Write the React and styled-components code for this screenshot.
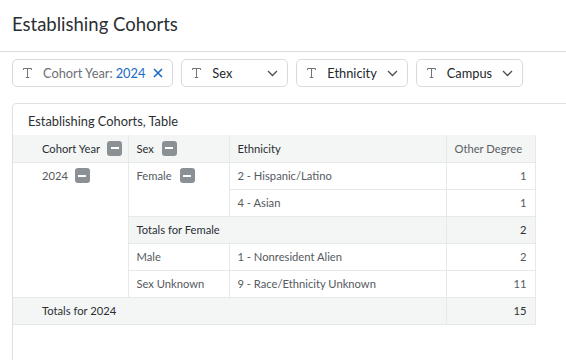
import React from 'react';
import styled, { createGlobalStyle } from 'styled-components';

const GlobalStyle = createGlobalStyle`
  body {
    margin: 0;
    font-family: Lato, "Noto Sans", sans-serif;
    background: #ffffff;
    overflow: hidden;
  }
`;

const Page = styled.div`
  width: 566px;
  height: 360px;
  overflow: hidden;
`;

const TitleBar = styled.header`
  height: 52px;
  box-sizing: border-box;
  padding: 11px 12px 0;
  border-bottom: 1px solid #dcdcdc;
  font-size: 18.5px;
  line-height: 26px;
  color: #2b2f33;
`;

const FilterBar = styled.div`
  display: flex;
  gap: 8px;
  padding: 7px 12px 0;
`;

const Pill = styled.div`
  display: flex;
  align-items: center;
  height: 28px;
  box-sizing: border-box;
  min-width: ${p => p.minWidth || 0}px;
  padding: 0 9px 0 10px;
  border: 1px solid #dadada;
  border-radius: 5px;
  font-size: 12.8px;
  color: #222;
`;

const Label = styled.span`
  margin-left: 11px;
  color: ${p => p.muted ? '#6b7075' : '#23272b'};
`;

const Value = styled.span`
  margin-left: 3px;
  color: #1a6bc4;
`;

const Trail = styled.span`
  display: flex;
  margin-left: auto;
  padding-left: ${p => p.space || 10}px;
`;

const Card = styled.section`
  margin: 16px 0 0 12px;
  width: 620px;
  height: 300px;
  border: 1px solid #e0e0e0;
  border-radius: 4px;
`;

const CardTitle = styled.div`
  height: 31px;
  box-sizing: border-box;
  padding: 3px 0 0 15px;
  display: flex;
  align-items: center;
  font-size: 12.8px;
  color: #2b2f33;
`;

const Table = styled.table`
  border-collapse: collapse;
  table-layout: fixed;
  width: 522px;
  font-size: 11.2px;
`;

const Row = styled.tr`
  height: 27px;
`;

const Cell = styled.td`
  box-sizing: border-box;
  padding: 0 8px 0 ${p => p.indent ? 29 : 8}px;
  border: 1px solid #e6e9e9;
  border-top: none;
  background: ${p => p.shade ? '#f4f6f6' : '#ffffff'};
  color: ${p => p.strong ? '#2b2f33' : '#555a5e'};
  text-align: ${p => p.num ? 'right' : 'left'};
  vertical-align: ${p => p.top ? 'top' : 'middle'};
  white-space: nowrap;
  &:first-child { border-left: none; }
`;

const Head = styled.th`
  box-sizing: border-box;
  padding: 0 8px 0 ${p => p.indent ? 29 : 8}px;
  border: 1px solid #e6e9e9;
  border-top: none;
  background: #f4f6f6;
  font-weight: normal;
  text-align: left;
  color: ${p => p.light ? '#5b6064' : '#2b2f33'};
  white-space: nowrap;
  &:first-child { border-left: none; }
`;

const Inline = styled.div`
  display: flex;
  align-items: center;
  gap: ${p => p.gap || 7}px;
  height: ${p => p.h || 'auto'};
`;

const Collapse = styled.span`
  display: inline-flex;
  flex: none;
  align-items: center;
  justify-content: center;
  width: 15px;
  height: 15px;
  border-radius: 3px;
  background: #8b9095;
  &::after {
    content: '';
    width: 8px;
    height: 2px;
    background: #ffffff;
  }
`;

const TypeIcon = () => (
  <svg width="9" height="10" viewBox="0 0 9 10" fill="none" stroke="#6f7479" strokeWidth="1">
    <path d="M0.5 2 V0.5 H8.5 V2" />
    <path d="M4.5 0.5 V9.5" />
    <path d="M2.8 9.5 H6.2" />
  </svg>
);

const Chevron = () => (
  <svg width="11" height="7" viewBox="0 0 11 7" fill="none" stroke="#4a4f54" strokeWidth="1.3">
    <path d="M1 1 L5.5 5.5 L10 1" />
  </svg>
);

const Close = () => (
  <svg width="10" height="10" viewBox="0 0 10 10" fill="none" stroke="#1a6bc4" strokeWidth="1.6">
    <path d="M1 1 L9 9 M9 1 L1 9" />
  </svg>
);

const filters = [
  { label: 'Sex', minWidth: 107 },
  { label: 'Ethnicity', minWidth: 107 },
  { label: 'Campus', minWidth: 107 },
];

export default function App() {
  return (
    <Page>
      <GlobalStyle />
      <TitleBar>Establishing Cohorts</TitleBar>
      <FilterBar>
        <Pill>
          <TypeIcon />
          <Label muted>Cohort Year:</Label>
          <Value>2024</Value>
          <Trail space={8}><Close /></Trail>
        </Pill>
        {filters.map(f => (
          <Pill key={f.label} minWidth={f.minWidth}>
            <TypeIcon />
            <Label>{f.label}</Label>
            <Trail><Chevron /></Trail>
          </Pill>
        ))}
      </FilterBar>
      <Card>
        <CardTitle>Establishing Cohorts, Table</CardTitle>
        <Table>
          <colgroup>
            <col style={{ width: 115 }} />
            <col style={{ width: 101 }} />
            <col style={{ width: 217 }} />
            <col style={{ width: 89 }} />
          </colgroup>
          <thead>
            <Row>
              <Head indent><Inline>Cohort Year <Collapse /></Inline></Head>
              <Head><Inline gap={8}>Sex <Collapse /></Inline></Head>
              <Head>Ethnicity</Head>
              <Head light>Other Degree</Head>
            </Row>
          </thead>
          <tbody>
            <Row>
              <Cell indent top rowSpan={5}><Inline h="26px">2024 <Collapse /></Inline></Cell>
              <Cell top rowSpan={2}><Inline gap={8} h="26px">Female <Collapse /></Inline></Cell>
              <Cell>2 - Hispanic/Latino</Cell>
              <Cell num>1</Cell>
            </Row>
            <Row>
              <Cell>4 - Asian</Cell>
              <Cell num>1</Cell>
            </Row>
            <Row>
              <Cell shade strong colSpan={2}>Totals for Female</Cell>
              <Cell shade strong num>2</Cell>
            </Row>
            <Row>
              <Cell>Male</Cell>
              <Cell>1 - Nonresident Alien</Cell>
              <Cell num>2</Cell>
            </Row>
            <Row>
              <Cell>Sex Unknown</Cell>
              <Cell>9 - Race/Ethnicity Unknown</Cell>
              <Cell num>11</Cell>
            </Row>
            <Row>
              <Cell shade strong indent colSpan={3}>Totals for 2024</Cell>
              <Cell shade strong num>15</Cell>
            </Row>
          </tbody>
        </Table>
      </Card>
    </Page>
  );
}
